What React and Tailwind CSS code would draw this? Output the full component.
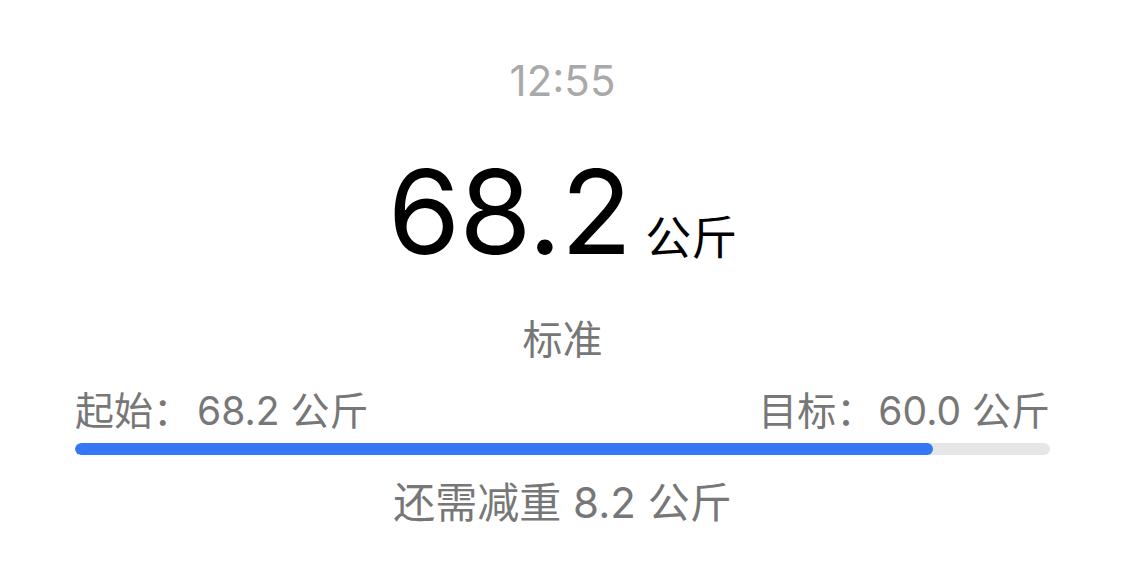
export default function App() {
    const start = 68.2
    const goal = 60.0
    const progress = 0.88

    return (
        <div
            className="w-[1125px] h-[583px] bg-white flex flex-col items-center"
            style={{ fontFamily: 'Inter, "Noto Sans CJK SC", sans-serif' }}
        >
            <div className="mt-[60px] text-[42px] leading-none text-[#a9a9a9]">12:55</div>

            <div className="mt-[51px] flex items-baseline">
                <span className="text-[117px] leading-none text-black tracking-[-1px]">68.2</span>
                <span className="ml-[14px] text-[46px] leading-none text-black">公斤</span>
            </div>

            <div className="mt-[50px] text-[40px] leading-none text-[#777777]">标准</div>

            <div className="mt-[31px] w-[975px] flex flex-col">
                <div className="flex justify-between items-end text-[39px] leading-none text-[#777777]">
                    <span>起始：<span className="ml-[5px]">{start.toFixed(1)} 公斤</span></span>
                    <span>目标：<span className="ml-[3px]">{goal.toFixed(1)} 公斤</span></span>
                </div>
                <div className="mt-[13px] h-[12px] w-full rounded-full bg-[#e6e6e6] overflow-hidden">
                    <div
                        className="h-full rounded-full bg-[#3478f6]"
                        style={{ width: `${progress * 100}%` }}
                    />
                </div>
            </div>

            <div className="mt-[27px] text-[42px] leading-none text-[#777777]">还需减重 8.2 公斤</div>
        </div>
    )
}
